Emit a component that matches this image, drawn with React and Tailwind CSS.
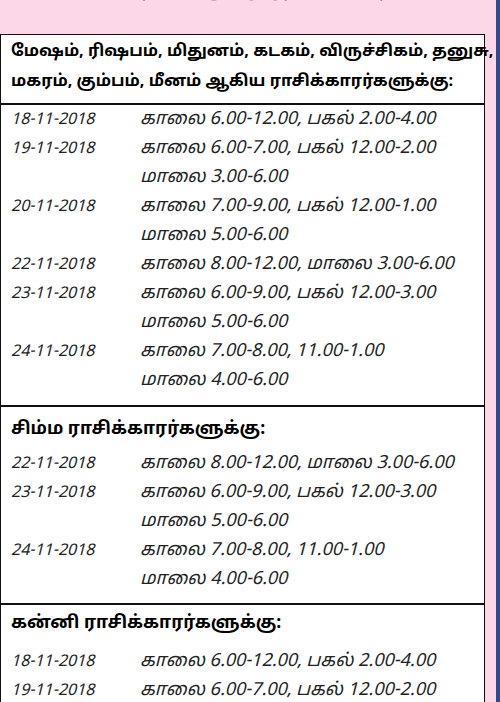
import React from 'react'

const tamil = '"Noto Sans Tamil", "Lohit Tamil", "Noto Sans", sans-serif'

const first = [
  ['18-11-2018', ['காலை 6.00-12.00, பகல் 2.00-4.00']],
  ['19-11-2018', ['காலை 6.00-7.00, பகல் 12.00-2.00', 'மாலை 3.00-6.00']],
  ['20-11-2018', ['காலை 7.00-9.00, பகல் 12.00-1.00', 'மாலை 5.00-6.00']],
  ['22-11-2018', ['காலை 8.00-12.00, மாலை 3.00-6.00']],
  ['23-11-2018', ['காலை 6.00-9.00, பகல் 12.00-3.00', 'மாலை 5.00-6.00']],
  ['24-11-2018', ['காலை 7.00-8.00, 11.00-1.00', 'மாலை 4.00-6.00']],
]

const simha = [
  ['22-11-2018', ['காலை 8.00-12.00, மாலை 3.00-6.00']],
  ['23-11-2018', ['காலை 6.00-9.00, பகல் 12.00-3.00', 'மாலை 5.00-6.00']],
  ['24-11-2018', ['காலை 7.00-8.00, 11.00-1.00', 'மாலை 4.00-6.00']],
]

const kanni = [
  ['18-11-2018', ['காலை 6.00-12.00, பகல் 2.00-4.00']],
  ['19-11-2018', ['காலை 6.00-7.00, பகல் 12.00-2.00']],
]

function Rows({ rows }) {
  return (
    <div className="flex flex-col">
      {rows.map(([date, times]) =>
        times.map((t, i) => (
          <div key={date + i} className="flex h-[29px] items-center whitespace-nowrap italic text-[18px] text-[#222]">
            <span className="w-[139px] shrink-0 pl-[10px] text-[16px]">{i === 0 ? date : ''}</span>
            <span>{t}</span>
          </div>
        ))
      )}
    </div>
  )
}

export default function App() {
  return (
    <div className="flex h-[702px] w-[500px] overflow-hidden bg-[#fbd7e7]" style={{ fontFamily: tamil }}>
      <div className="flex w-[485px] shrink-0 flex-col">
        <div className="h-[34px] shrink-0 overflow-hidden">
          <div className="-mt-[21px] whitespace-nowrap pl-[12px] text-[18px] leading-[24px] text-[#333]">
            மேஷம் ராசி நேயர்களுக்கு குறிப்பிட்ட நேரங்களில் தரிசனம் செய்யலாம்
          </div>
        </div>
        <div className="flex-1 border-[1.5px] border-b-0 border-[#111] bg-white">
          <div className="whitespace-nowrap border-b-2 border-[#111] px-[10px] pb-[6px] pt-[2px] text-[16.3px] font-bold leading-[30px] text-black">
            <div>மேஷம், ரிஷபம், மிதுனம், கடகம், விருச்சிகம், தனுசு,</div>
            <div>மகரம், கும்பம், மீனம் ஆகிய ராசிக்காரர்களுக்கு:</div>
          </div>
          <div className="border-b-2 border-[#111] pb-[10px]">
            <Rows rows={first} />
          </div>
          <div className="border-b-2 border-[#111] pb-[9px]">
            <div className="px-[10px] pt-[8px] pb-[4px] text-[17.5px] font-bold leading-[30px]">சிம்ம ராசிக்காரர்களுக்கு:</div>
            <Rows rows={simha} />
          </div>
          <div>
            <div className="px-[10px] pt-[4px] pb-[8px] text-[17.5px] font-bold leading-[30px]">கன்னி ராசிக்காரர்களுக்கு:</div>
            <Rows rows={kanni} />
          </div>
        </div>
      </div>
      <div className="flex-1" />
      <div className="w-[4px] shrink-0 bg-[#2a4a9c]" />
    </div>
  )
}
